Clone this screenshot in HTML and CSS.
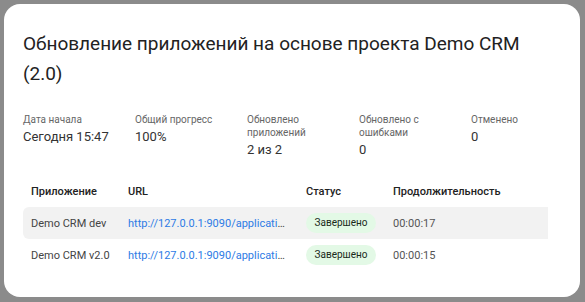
FILE: index.html
```html
<!DOCTYPE html>
<html lang="ru">
<head>
<meta charset="utf-8">
<link rel="stylesheet" href="styles.css">
</head>
<body>
<div class="card">
  <h1 class="title">Обновление приложений на основе проекта Demo CRM (2.0)</h1>
  <div class="stats">
    <div class="stat"><div class="label">Дата начала</div><div class="value">Сегодня 15:47</div></div>
    <div class="stat"><div class="label">Общий прогресс</div><div class="value">100%</div></div>
    <div class="stat"><div class="label">Обновлено приложений</div><div class="value">2 из 2</div></div>
    <div class="stat"><div class="label">Обновлено с ошибками</div><div class="value">0</div></div>
    <div class="stat"><div class="label">Отменено</div><div class="value">0</div></div>
  </div>
  <table class="table">
    <colgroup><col class="c1"><col class="c2"><col class="c3"><col class="c4"></colgroup>
    <thead>
      <tr><th>Приложение</th><th>URL</th><th>Статус</th><th>Продолжительность</th></tr>
    </thead>
    <tbody>
      <tr class="hl"><td>Demo CRM dev</td><td class="url"><a>http://127.0.0.1:9090/applications/demo-crm-dev</a></td><td><span class="badge">Завершено</span></td><td class="dur">00:00:17</td></tr>
      <tr><td>Demo CRM v2.0</td><td class="url"><a>http://127.0.0.1:9090/applications/demo-crm-v2</a></td><td><span class="badge">Завершено</span></td><td class="dur">00:00:15</td></tr>
    </tbody>
  </table>
</div>
</body>
</html>
```
FILE: styles.css
```css
html, body { margin: 0; padding: 0; }
body {
  background: #8b8b8b;
  padding: 4px 5px 5px 4px;
  font-family: Roboto, "Noto Sans", sans-serif;
  color: #333;
}
.card {
  background: #fff;
  border-radius: 16px;
  height: 293px;
  box-sizing: border-box;
  padding: 25px 19px 0 19px;
}
.title {
  margin: 0;
  font-size: 19px;
  font-weight: 400;
  line-height: 30px;
  color: #222;
}
.stats {
  display: flex;
  gap: 16px;
  margin-top: 24px;
}
.stat { width: 96px; flex: none; }
.label {
  font-size: 10px;
  line-height: 13px;
  color: #666;
}
.value {
  font-size: 13px;
  line-height: 18px;
  color: #333;
  margin-top: 2px;
}
.table {
  border-collapse: collapse;
  table-layout: fixed;
  width: 525px;
  margin-top: 16px;
  font-size: 11px;
}
.c1 { width: 97px; }
.c2 { width: 178px; }
.c3 { width: 87px; }
.c4 { width: 163px; }
th {
  text-align: left;
  font-weight: 500;
  color: #222;
  height: 32px;
  padding: 0 8px;
  font-size: 11px;
}
td {
  height: 32px;
  padding: 0 8px;
  color: #444;
  white-space: nowrap;
}
td.url {
  overflow: hidden;
  text-overflow: ellipsis;
}
tr.hl td { background: #f2f2f2; }
tr.hl td:first-child { border-radius: 6px 0 0 6px; }
.url a { color: #2d7be5; }
.badge {
  display: inline-block;
  width: 70px;
  height: 20px;
  line-height: 20px;
  text-align: center;
  border-radius: 10px;
  background: #e3f9e6;
  color: #1a2a20;
  font-size: 10px;
}
.dur { color: #555; }
```
